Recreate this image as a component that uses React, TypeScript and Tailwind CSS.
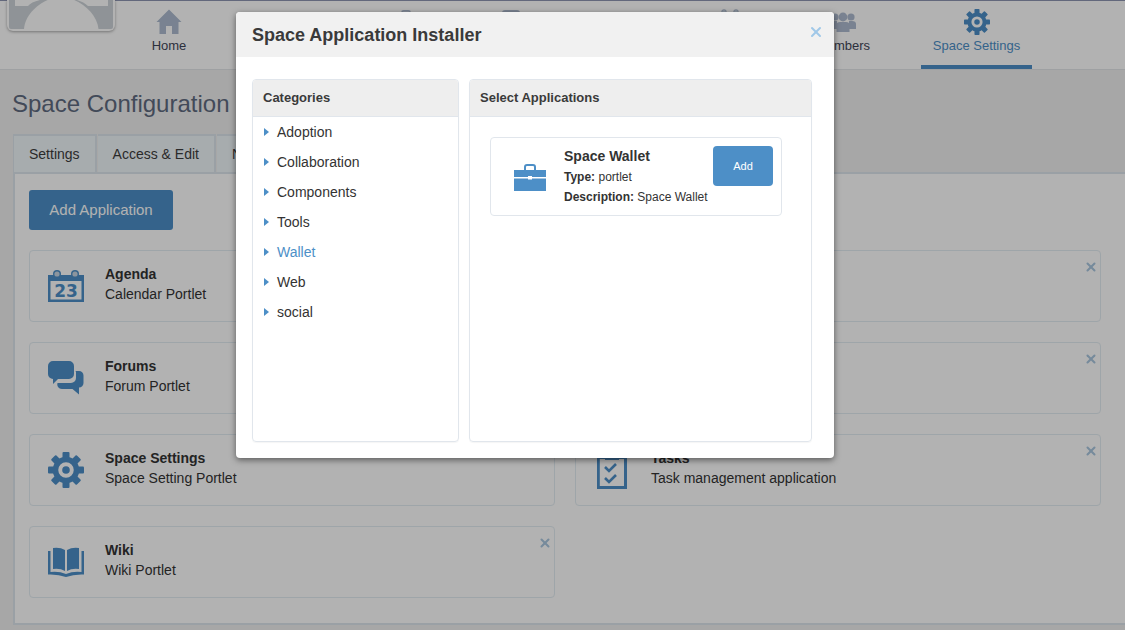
import { ReactNode } from 'react';
import { X } from 'lucide-react';

type IconProps = { className?: string };

// Icons drawn by hand, they all take their colour from the text colour
const HomeIcon = ({ className }: IconProps) => (
  <svg viewBox="0 0 26 26" className={className} fill="currentColor">
    <path d="M13 0.5 L25.5 13 L22.5 13 L22.5 25 L16 25 L16 17 L10 17 L10 25 L3.5 25 L3.5 13 L0.5 13 Z" />
  </svg>
);

const GearIcon = ({ className }: IconProps) => (
  <svg viewBox="0 0 36 36" className={className} fill="currentColor">
    {[0, 45, 90, 135, 180, 225, 270, 315].map((deg) => (
      <rect key={deg} x="14.5" y="0" width="7" height="8" rx="1" transform={`rotate(${deg} 18 18)`} />
    ))}
    <circle cx="18" cy="18" r="10.5" fill="none" stroke="currentColor" strokeWidth="5.5" />
    <circle cx="18" cy="18" r="3.8" />
  </svg>
);

const CalendarIcon = ({ className }: IconProps) => (
  <svg viewBox="0 0 36 32" className={className} fill="currentColor">
    <path fillRule="evenodd" d="M0 5 H36 V32 H0 Z M2.5 11 V29.5 H33.500 V11 Z" />
    <circle cx="9" cy="4" r="4" />
    <circle cx="27" cy="4" r="4" />
    <circle cx="9" cy="4" r="2.6" fill="#c9d6e2" />
    <circle cx="27" cy="4" r="2.6" fill="#c9d6e2" />
    <text x="18" y="27" textAnchor="middle" fontSize="17" fontWeight="700" fontFamily="'DejaVu Sans', sans-serif">
      23
    </text>
  </svg>
);

const ForumIcon = ({ className }: IconProps) => (
  <svg viewBox="0 0 36 34" className={className} fill="currentColor">
    <path d="M5 0 H21 A5 5 0 0 1 26 5 V13 A5 5 0 0 1 21 18 H10 L5 23 V18 A5 5 0 0 1 0 13 V5 A5 5 0 0 1 5 0 Z" />
    <path d="M27.5 10 H31 A4.5 4.5 0 0 1 35.5 14.5 V22 A4.5 4.5 0 0 1 31 26.5 V33.5 L24.5 28 H14 A5 5 0 0 1 9.5 25 Q9 23 9.5 22 H23 A5 5 0 0 0 28 17 V11 Z" />
  </svg>
);

const TasksIcon = ({ className }: IconProps) => (
  <svg viewBox="0 0 30 38" className={className} fill="currentColor">
    <path fillRule="evenodd" d="M0 4 H30 V38 H0 Z M2.8 8 V35 H27 V8 Z" />
    <path d="M8 3 H11 Q12 0 15 0 Q18 0 19 3 H22 V9 H8 Z" />
    <path d="M8 16 L12 20 L19 13" fill="none" stroke="currentColor" strokeWidth="2.6" />
    <path d="M8 27 L12 31 L19 24" fill="none" stroke="currentColor" strokeWidth="2.6" />
  </svg>
);

const BookIcon = ({ className }: IconProps) => (
  <svg viewBox="0 0 36 30" className={className} fill="currentColor">
    <path d="M5 1 Q12 0 17 3 V24 Q12 21 5 22 Z" />
    <path d="M31 1 Q24 0 19 3 V24 Q24 21 31 22 Z" />
    <path d="M0 4 H2.5 V25 Q11 24 18 27 Q25 24 33.5 25 V4 H36 V27.5 Q26 27 18 30 Q10 27 0 27.5 Z" />
  </svg>
);

const BriefcaseIcon = ({ className }: IconProps) => (
  <svg viewBox="0 0 32 27" className={className} fill="currentColor">
    <path d="M0 6 H32 V13 H18 V12 H14 V13 H0 Z" />
    <path d="M0 14.5 H14 V15.5 H18 V14.5 H32 V27 H0 Z" />
    <path d="M10 6 V3 A3 3 0 0 1 13 0 H19 A3 3 0 0 1 22 3 V6 H20 V3 A1 1 0 0 0 19 2 H13 A1 1 0 0 0 12 3 V6 Z" />
  </svg>
);

const PageIcon = ({ className }: IconProps) => (
  <svg viewBox="0 0 18 26" className={className} fill="currentColor">
    <path d="M3 1 H15 A3 3 0 0 1 18 4 V26 H0 V4 A3 3 0 0 1 3 1 Z" />
  </svg>
);

const MembersIcon = ({ className }: IconProps) => (
  <svg viewBox="0 0 26 20" className={className} fill="currentColor">
    <circle cx="5" cy="5" r="3.6" />
    <circle cx="21" cy="5" r="3.6" />
    <path d="M0 17 V12 Q0 9 4 9 H7 V17 Z" />
    <path d="M26 17 V12 Q26 9 22 9 H19 V17 Z" />
    <circle cx="13" cy="5" r="4.4" />
    <path d="M6.500 20 V13 Q6.500 10 10 10 H16 Q19.500 10 19.500 13 V20 Z" />
  </svg>
);

const Logo = () => (
  <div className="absolute top-0 left-[7px] w-[108px] h-[31px] bg-white rounded-b-md shadow-[0_1px_3px_rgba(0,0,0,0.35)]">
    <svg viewBox="0 0 108 31" className="w-full h-full">
      <path d="M2 0 H106 V27 Q106 29 104 29 H4 Q2 29 2 27 Z" fill="#cdd3d8" />
      <path d="M17 29 C18 12 38 -3 54 -3 C70 -3 90 12 91.500 29 Z" fill="#ffffff" />
      <path d="M8 0 H33 Q24 2 21 6 H8 Z" fill="#ffffff" />
      <path d="M70 0 H101 V6 H81 Q77 2 70 0 Z" fill="#ffffff" />
    </svg>
  </div>
);

// The modal hides most of the navigation: only the tops of these icons show above it
const navItems: { label?: string; width: string; icon?: ReactNode }[] = [
  { label: 'Home', width: 'w-[90px]', icon: <HomeIcon className="w-[26px] h-[26px]" /> },
  { width: 'w-[137px]' },
  { width: 'w-[110px]', icon: <BriefcaseIcon className="w-[26px] h-[24px]" /> },
  { width: 'w-[100px]', icon: <PageIcon className="w-[18px] h-[26px]" /> },
  { width: 'w-[114px]' },
  { width: 'w-[110px]', icon: <CalendarIcon className="w-[24px] h-[22px]" /> },
  { label: 'Members', width: 'w-[116px]', icon: <MembersIcon className="mt-[3px] w-[26px] h-[20px]" /> },
];

const NavItem = ({ label, icon, width }: { label?: string; icon?: ReactNode; width: string }) => (
  <div className={`${width} h-[68px] flex flex-col items-center text-[#aebbd0]`}>
    <div className="h-[26px] mt-[8px] flex items-start justify-center">{icon}</div>
    {label && <span className="mt-[2px] text-[13px] leading-[17px] text-[#3f4658]">{label}</span>}
  </div>
);

const TopBar = () => (
  <div className="h-[70px] bg-white border-t border-t-[#8f96b2] border-b border-b-[#e3e6e8] flex pl-[124px]">
    {navItems.map((item, i) => (
      <NavItem key={i} {...item} />
    ))}
    <div className="ml-[20px] w-[111px] h-[68px] flex flex-col items-center border-b-4 border-[#4d8fc7] text-[#4d8fc7]">
      <div className="h-[26px] mt-[8px]">
        <GearIcon className="w-[26px] h-[26px]" />
      </div>
      <span className="mt-[2px] text-[13px] leading-[17px]">Space Settings</span>
    </div>
  </div>
);

const tabs = ['Settings', 'Access & Edit', 'Navigations'];

const Tabs = () => (
  <div className="h-[40px] flex gap-px -ml-px border-b-2 border-[#dde6ed]">
    {tabs.map((tab) => (
      <div key={tab} className="px-[15px] bg-[#f0f6fa] border-t-2 border-r-2 border-[#dde6ed] text-sm text-[#3d3d3d] leading-[37px]">
        {tab}
      </div>
    ))}
  </div>
);

type Portlet = { title?: string; text?: string; icon?: ReactNode };

const portlets: Portlet[] = [
  { title: 'Agenda', text: 'Calendar Portlet', icon: <CalendarIcon className="w-[36px] h-[32px]" /> },
  {},
  { title: 'Forums', text: 'Forum Portlet', icon: <ForumIcon className="w-[36px] h-[34px]" /> },
  {},
  { title: 'Space Settings', text: 'Space Setting Portlet', icon: <GearIcon className="w-[36px] h-[36px]" /> },
  { title: 'Tasks', text: 'Task management application', icon: <TasksIcon className="w-[30px] h-[38px]" /> },
  { title: 'Wiki', text: 'Wiki Portlet', icon: <BookIcon className="w-[36px] h-[30px]" /> },
];

const PortletCard = ({ title, text, icon }: Portlet) => (
  <div className="relative h-[72px] flex items-center bg-white border border-[#e3ecf2] rounded text-[#333]">
    <div className="w-[71px] mr-[4px] flex justify-center text-[#4d8fc7]">{icon}</div>
    <div className="pb-[4px] text-sm leading-[20px]">
      <div className="font-bold">{title}</div>
      <div>{text}</div>
    </div>
    <X className="absolute top-[9px] right-[2px] w-[14px] h-[14px] text-[#a9c6de]" strokeWidth={3.5} />
  </div>
);

const categories = ['Adoption', 'Collaboration', 'Components', 'Tools', 'Wallet', 'Web', 'social'];

const Panel = ({ title, className, children }: { title: string; className: string; children: ReactNode }) => (
  <div className={`${className} h-[363px] border border-[#e1e6ec] rounded overflow-hidden shadow-[0_1px_1px_rgba(0,0,0,0.04)]`}>
    <div className="h-[37px] bg-[#eeeeee] border-b border-[#e1e6ec] px-[10px] text-[13px] leading-[36px] font-bold text-[#3a3a3a]">
      {title}
    </div>
    {children}
  </div>
);

const InstallerModal = () => (
  <div className="absolute top-[12px] left-[236px] w-[598px] h-[446px] bg-white rounded shadow-[0_2px_6px_rgba(0,0,0,0.5)] overflow-hidden text-[#333]">
    <div className="relative h-[45px] bg-[#f1f1f1] px-[16px] text-[18px] leading-[46px] font-bold text-[#3a3a3a]">
      Space Application Installer
      <X className="absolute top-[12px] right-[10px] w-[16px] h-[16px] text-[#a0c8e8]" strokeWidth={3} />
    </div>
    <div className="flex gap-[10px] px-[16px] pt-[22px]">
      <Panel title="Categories" className="w-[207px]">
        <ul>
          {categories.map((cat) => (
            <li key={cat} className={`h-[30px] flex items-center pl-[11px] text-sm ${cat === 'Wallet' ? 'text-[#4d8fc7]' : 'text-[#333]'}`}>
              <span className="w-0 h-0 mr-[8px] border-y-[4px] border-y-transparent border-l-[5px] border-l-[#4d8fc7]" />
              {cat}
            </li>
          ))}
        </ul>
      </Panel>
      <Panel title="Select Applications" className="w-[343px]">
        <div className="ml-[20px] mt-[20px] w-[292px] h-[79px] flex border border-[#e1e6ec] rounded">
          <div className="w-[73px] flex items-center justify-center pl-[4px] pt-[2px] text-[#4d8fc7]">
            <BriefcaseIcon className="w-[32px] h-[27px]" />
          </div>
          <div className="w-[149px] text-xs leading-[20px] pt-[8px] whitespace-nowrap">
            <div className="text-sm font-bold leading-[20px] mb-[1px]">Space Wallet</div>
            <div>
              <b>Type:</b> portlet
            </div>
            <div>
              <b>Description:</b> Space Wallet
            </div>
          </div>
          <div className="w-[60px] h-[40px] mt-[8px] bg-[#4d8fc7] rounded-sm text-white text-[11px] leading-[40px] text-center">
            Add
          </div>
        </div>
      </Panel>
    </div>
  </div>
);

const App = () => {
  return (
    <div className="relative w-[1125px] h-[630px] overflow-hidden bg-[#f0f0f0] font-['Liberation_Sans',sans-serif]">
      <TopBar />
      <Logo />
      <h1 className="ml-[12px] mt-[19px] mb-[16px] text-2xl leading-[29px] text-[#5f6b80]">Space Configuration</h1>
      <div className="ml-[13px] h-[491px] border-l-2 border-b-2 border-[#dde6ed]">
        <Tabs />
        <div className="h-[449px] bg-white pl-[14px] pr-[24px] pt-[16px]">
          <div className="w-[144px] h-[40px] bg-[#4d8fc7] rounded-[3px] text-white text-[15px] leading-[40px] text-center">
            Add Application
          </div>
          <div className="mt-[20px] grid grid-cols-2 gap-5">
            {portlets.map((p, i) => (
              <PortletCard key={i} {...p} />
            ))}
          </div>
        </div>
      </div>
      <div className="absolute inset-0 bg-black/30" />
      <InstallerModal />
    </div>
  );
};

export default App;
